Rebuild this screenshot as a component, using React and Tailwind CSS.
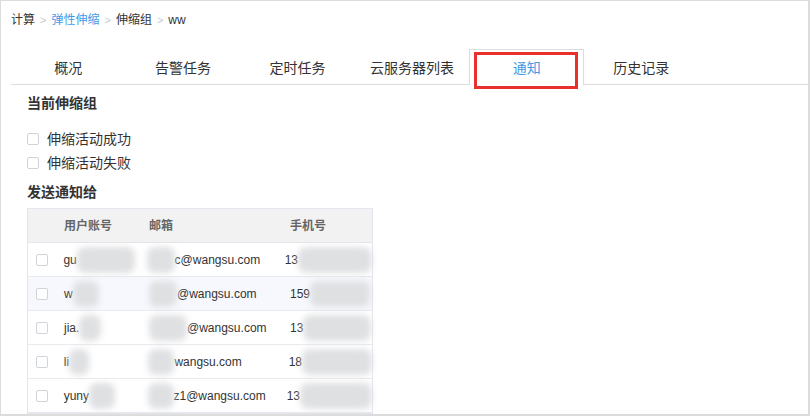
import React from 'react';

const tabs = ['概况', '告警任务', '定时任务', '云服务器列表', '通知', '历史记录'];

// each cell: [visible prefix, blur width, visible suffix]
const rows = [
  { user: ['gu', 58, ''], mail: ['', 28, 'c@wangsu.com'], phone: ['13', 74, ''] },
  { user: ['w', 26, ''], mail: ['', 28, '@wangsu.com'], phone: ['159', 60, ''], hover: true },
  { user: ['jia.', 22, ''], mail: ['', 38, '@wangsu.com'], phone: ['13', 68, ''] },
  { user: ['li', 20, ''], mail: ['', 26, 'wangsu.com'], phone: ['18', 70, ''] },
  { user: ['yuny', 26, ''], mail: ['', 26, 'z1@wangsu.com'], phone: ['13', 72, ''] },
];

function Box() {
  return <span className="inline-block w-[12px] h-[12px] border border-[#cfd3da] rounded-[2px] bg-white shrink-0"></span>;
}

function Masked({ cell }) {
  const [pre, w, post] = cell;
  return (
    <span className="flex items-center whitespace-nowrap">
      {pre}
      <span className="inline-block h-[26px] bg-[#dfe0e2] blur-[3px] rounded-[8px]" style={{ width: w }}></span>
      {post}
    </span>
  );
}

export default function App() {
  return (
    <div
      className="relative w-[810px] h-[416px] overflow-hidden bg-white border-t border-l border-r-2 border-b-2 border-[#dcdcdc] text-[#333]"
      style={{ fontFamily: '"Liberation Sans", "Noto Sans CJK SC", sans-serif' }}
    >
      {/* breadcrumb */}
      <div className="pt-[11px] pl-[10px] text-[12px] leading-[16px] flex items-center gap-[5px]">
        <span>计算</span>
        <span className="text-[#c8c8c8] text-[11px]">&gt;</span>
        <span className="text-[#3f9ae8]">弹性伸缩</span>
        <span className="text-[#c8c8c8] text-[11px]">&gt;</span>
        <span>伸缩组</span>
        <span className="text-[#c8c8c8] text-[11px]">&gt;</span>
        <span>ww</span>
      </div>

      {/* tabs */}
      <div className="mt-[21px] ml-[10px] flex border-b border-[#dcdcdc] h-[36px]">
        {tabs.map((t) => (
          <div
            key={t}
            className={
              t === '通知'
                ? 'w-[114.6px] h-[36px] flex items-center justify-center pt-[1px] text-[14px] text-[#3f9ae8] bg-white border-t border-l border-r border-[#dcdcdc]'
                : 'w-[114.6px] h-[36px] flex items-center justify-center pt-[2px] text-[14px]'
            }
          >
            {t}
          </div>
        ))}
      </div>

      <div className="pl-[26px]">
        <div className="mt-[8px] text-[14px] leading-[20px] font-bold">当前伸缩组</div>

        <div className="mt-[14px] flex flex-col">
          <label className="h-[24px] flex items-center gap-[8px] text-[14px]">
            <Box />
            伸缩活动成功
          </label>
          <label className="h-[24px] flex items-center gap-[8px] text-[14px]">
            <Box />
            伸缩活动失败
          </label>
        </div>

        <div className="mt-[7px] text-[14px] leading-[20px] font-bold">发送通知给</div>

        <div className="mt-[6px] w-[346px] border border-[#e3e6ec] text-[12px]">
          <div className="flex items-center h-[34px] bg-[#f2f2f2] border-b border-[#e3e6ec] font-semibold text-[#666]">
            <div className="w-[36px]"></div>
            <div className="w-[85px]">用户账号</div>
            <div className="w-[141px]">邮箱</div>
            <div>手机号</div>
          </div>
          {rows.map((r, i) => (
            <div
              key={i}
              className={
                r.hover
                  ? 'flex items-center h-[34px] border-b border-[#e8eaef] bg-[#f6f8fd]'
                  : 'flex items-center h-[34px] border-b border-[#e8eaef]'
              }
            >
              <div className="w-[36px] pl-[8px] flex items-center">
                <Box />
              </div>
              <div className="w-[85px]">
                <Masked cell={r.user} />
              </div>
              <div className="w-[141px]">
                <Masked cell={r.mail} />
              </div>
              <div>
                <Masked cell={r.phone} />
              </div>
            </div>
          ))}
        </div>
      </div>

      {/* annotation box */}
      <div className="absolute left-[473px] top-[51px] w-[104px] h-[37px] border-[3px] border-[#e8302c]"></div>
    </div>
  );
}
